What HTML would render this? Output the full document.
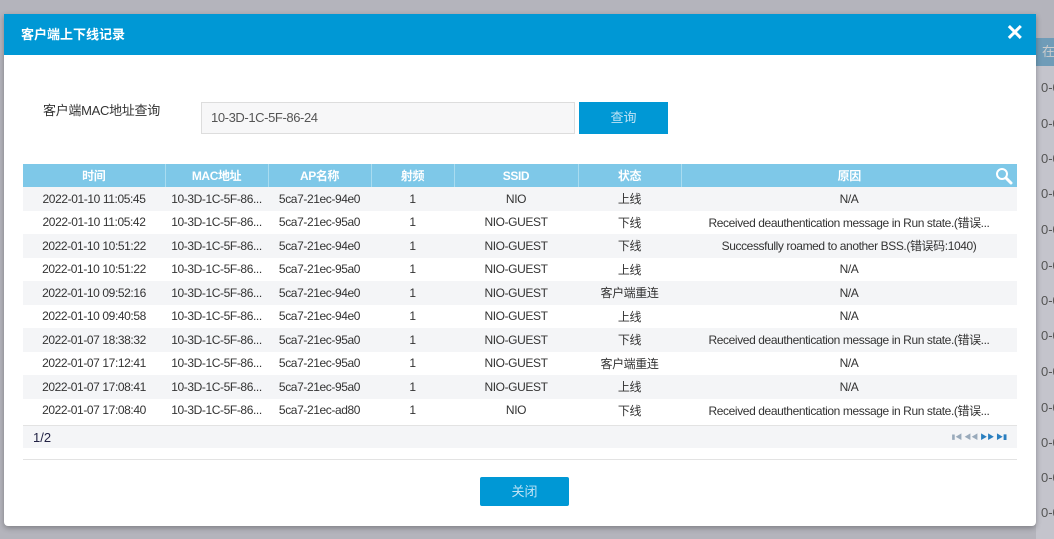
<!DOCTYPE html>
<html><head><meta charset="utf-8"><style>
body{margin:0;width:1054px;height:539px;background:#b4b4bc;position:relative;overflow:hidden;font-family:"Liberation Sans","Noto Sans CJK SC",sans-serif;color:#333;}
.bg{position:absolute;left:1036px;top:38px;width:18px;height:501px;background:#c4c4cc}
.bgh{position:absolute;left:1036px;top:38px;width:18px;height:28px;background:#6f9cb8;color:#ccc;font-size:13px;line-height:28px;padding-left:6px;box-sizing:border-box;white-space:nowrap;overflow:hidden}
.bgr{position:absolute;left:1036px;width:18px;font-size:13px;color:#555;padding-left:5px;box-sizing:border-box;white-space:nowrap;overflow:hidden}
.modal{position:absolute;left:4px;top:14px;width:1032px;height:512px;background:#fff;border-radius:0 0 4px 4px;box-shadow:0 2px 6px rgba(0,0,0,.3)}
.hd{height:41px;background:#0098d5;color:#fff;font-size:13px;line-height:41px;padding-left:17px;font-weight:bold}
.x{position:absolute;right:12px;top:8px;color:#fff;font-size:22px;font-weight:bold;line-height:22px}
.lbl{position:absolute;left:39px;top:86px;font-size:13px;letter-spacing:-0.3px}
.inp{position:absolute;left:197px;top:88px;width:374px;height:32px;border:1px solid #ddd;background:#f7f7f8;box-sizing:border-box;font-size:13px;line-height:30px;padding-left:9px;color:#555;letter-spacing:-0.4px}
.btn{position:absolute;left:575px;top:88px;width:89px;height:32px;background:#0098d5;color:#bfe3f5;font-size:13px;line-height:32px;text-align:center}
table{position:absolute;left:19px;top:150px;width:994px;border-collapse:collapse;font-size:12px;table-layout:fixed;letter-spacing:-0.4px}
th{background:#7ec8e8;color:#fff;height:23px;font-weight:bold;border-right:1px solid #a9dcf0;padding:0}
th:last-child{border-right:none}
td{height:23.5px;text-align:center;padding:0;white-space:nowrap;overflow:hidden}
tr:nth-child(even) td{background:#f4f5f7}
.ft{position:absolute;left:19px;top:411px;width:994px;height:23px;background:#f4f5f7;border-top:1px solid #e3e3e3;font-size:13px;line-height:23px;box-sizing:border-box;padding-left:10px;color:#224}
.pg{position:absolute;right:10px;top:0;font-size:7px;color:#9ab}
.line{position:absolute;left:19px;top:445px;width:994px;height:1px;background:#e3e3e3}
.cl{position:absolute;left:476px;top:463px;width:89px;height:29px;background:#0098d5;color:#bfe3f5;font-size:13px;line-height:29px;text-align:center;border-radius:2px}
</style></head><body>
<div class="bg"></div><div class="bgh">在</div>
<div class="bgr" style="top:80px">0-0</div><div class="bgr" style="top:116px">0-0</div><div class="bgr" style="top:151px">0-0</div><div class="bgr" style="top:186px">0-0</div><div class="bgr" style="top:222px">0-0</div><div class="bgr" style="top:258px">0-0</div><div class="bgr" style="top:293px">0-0</div><div class="bgr" style="top:328px">0-0</div><div class="bgr" style="top:364px">0-0</div><div class="bgr" style="top:400px">0-0</div><div class="bgr" style="top:435px">0-0</div><div class="bgr" style="top:470px">0-0</div><div class="bgr" style="top:505px">0-0</div>
<div class="modal">
<div class="hd">客户端上下线记录</div><div class="x">✕</div>
<div class="lbl">客户端MAC地址查询</div>
<div class="inp">10-3D-1C-5F-86-24</div>
<div class="btn">查询</div>
<table>
<colgroup><col style="width:142px"><col style="width:103px"><col style="width:103px"><col style="width:83px"><col style="width:124px"><col style="width:103px"><col></colgroup>
<tr><th>时间</th><th>MAC地址</th><th>AP名称</th><th>射频</th><th>SSID</th><th>状态</th><th style="position:relative">原因<svg style="position:absolute;right:4px;top:3px" width="18" height="18" viewBox="0 0 18 18"><circle cx="7" cy="7" r="5" fill="none" stroke="#fff" stroke-width="2"/><path d="M11 11l5 5" stroke="#fff" stroke-width="3" stroke-linecap="round"/></svg></th></tr>
<tr><td>2022-01-10 11:05:45</td><td>10-3D-1C-5F-86...</td><td>5ca7-21ec-94e0</td><td>1</td><td>NIO</td><td>上线</td><td>N/A</td></tr>
<tr><td>2022-01-10 11:05:42</td><td>10-3D-1C-5F-86...</td><td>5ca7-21ec-95a0</td><td>1</td><td>NIO-GUEST</td><td>下线</td><td>Received deauthentication message in Run state.(错误...</td></tr>
<tr><td>2022-01-10 10:51:22</td><td>10-3D-1C-5F-86...</td><td>5ca7-21ec-94e0</td><td>1</td><td>NIO-GUEST</td><td>下线</td><td>Successfully roamed to another BSS.(错误码:1040)</td></tr>
<tr><td>2022-01-10 10:51:22</td><td>10-3D-1C-5F-86...</td><td>5ca7-21ec-95a0</td><td>1</td><td>NIO-GUEST</td><td>上线</td><td>N/A</td></tr>
<tr><td>2022-01-10 09:52:16</td><td>10-3D-1C-5F-86...</td><td>5ca7-21ec-94e0</td><td>1</td><td>NIO-GUEST</td><td>客户端重连</td><td>N/A</td></tr>
<tr><td>2022-01-10 09:40:58</td><td>10-3D-1C-5F-86...</td><td>5ca7-21ec-94e0</td><td>1</td><td>NIO-GUEST</td><td>上线</td><td>N/A</td></tr>
<tr><td>2022-01-07 18:38:32</td><td>10-3D-1C-5F-86...</td><td>5ca7-21ec-95a0</td><td>1</td><td>NIO-GUEST</td><td>下线</td><td>Received deauthentication message in Run state.(错误...</td></tr>
<tr><td>2022-01-07 17:12:41</td><td>10-3D-1C-5F-86...</td><td>5ca7-21ec-95a0</td><td>1</td><td>NIO-GUEST</td><td>客户端重连</td><td>N/A</td></tr>
<tr><td>2022-01-07 17:08:41</td><td>10-3D-1C-5F-86...</td><td>5ca7-21ec-95a0</td><td>1</td><td>NIO-GUEST</td><td>上线</td><td>N/A</td></tr>
<tr><td>2022-01-07 17:08:40</td><td>10-3D-1C-5F-86...</td><td>5ca7-21ec-ad80</td><td>1</td><td>NIO</td><td>下线</td><td>Received deauthentication message in Run state.(错误...</td></tr>
</table>
<div class="ft">1/2<span class="pg">▮◀ ◀◀ <b style="color:#2a7fc0">▶▶ ▶▮</b></span></div>
<div class="line"></div>
<div class="cl">关闭</div>
</div>
</body></html>
